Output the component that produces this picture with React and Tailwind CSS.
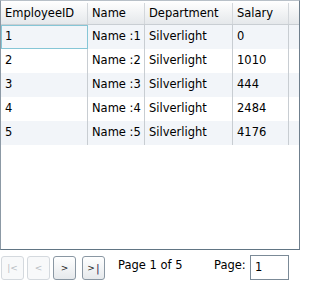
const rows = [
  { id: 1, name: "Name :1", dept: "Silverlight", salary: 0 },
  { id: 2, name: "Name :2", dept: "Silverlight", salary: 1010 },
  { id: 3, name: "Name :3", dept: "Silverlight", salary: 444 },
  { id: 4, name: "Name :4", dept: "Silverlight", salary: 2484 },
  { id: 5, name: "Name :5", dept: "Silverlight", salary: 4176 },
];

function PagerButton({ children, disabled }) {
  return (
    <div
      className={`flex items-center justify-center w-[23px] h-[24px] rounded-[3px] border ${
        disabled
          ? "border-[#d4d9de] text-[#b8bec4] bg-[#f8f9fa]"
          : "border-[#8a97a3] text-[#222] bg-gradient-to-b from-white to-[#e6e9ec]"
      } text-[9px] leading-none`}
    >
      {children}
    </div>
  );
}

export default function App() {
  return (
    <div
      className="w-[313px] h-[285px] bg-white text-[11.5px] text-black"
      style={{ fontFamily: '"DejaVu Sans", sans-serif' }}
    >
      <div className="w-[300px] h-[250px] border border-t-[#b8c0c8] border-l-[#8c99a5] border-r-[#6f7f8d] border-b-[#617584] flex flex-col">
        <div className="flex h-[24px] pt-[2px] bg-gradient-to-b from-white to-[#e5e8eb] border-b border-[#c9ced3]">
          <div className="w-[87px] pl-[4px] flex items-center border-r border-[#d3d7db]">EmployeeID</div>
          <div className="w-[57px] pl-[4px] flex items-center border-r border-[#d3d7db]">Name</div>
          <div className="w-[88px] pl-[4px] flex items-center border-r border-[#d3d7db]">Department</div>
          <div className="w-[56px] pl-[4px] flex items-center border-r border-[#d3d7db]">Salary</div>
          <div className="flex-1" />
        </div>
        {rows.map((r, idx) => (
          <div
            key={r.id}
            className={`flex h-[24px] ${idx % 2 === 0 ? "bg-[#f2f5f9]" : "bg-white"}`}
          >
            <div
              className={`w-[87px] pl-[4px] flex items-center border-r border-[#c8cdd2] ${
                idx === 0 ? "outline outline-1 -outline-offset-1 outline-[#86c6d6]" : ""
              }`}
            >
              {r.id}
            </div>
            <div className="w-[57px] pl-[4px] flex items-center border-r border-[#c8cdd2]">{r.name}</div>
            <div className="w-[88px] pl-[4px] flex items-center border-r border-[#c8cdd2]">{r.dept}</div>
            <div className="w-[56px] pl-[4px] flex items-center border-r border-[#c8cdd2]">{r.salary}</div>
            <div className="flex-1" />
          </div>
        ))}
        <div className="flex-1" />
      </div>
      <div className="flex items-start h-[35px] pt-[5px] pl-[1px]">
        <div className="flex gap-[3px] mt-[1px]">
          <PagerButton disabled>|&lt;</PagerButton>
          <PagerButton disabled>&lt;</PagerButton>
          <PagerButton>&gt;</PagerButton>
          <div className="ml-[3px]">
            <PagerButton>
              &gt;<span className="text-[#3b1f4f] text-[11px] ml-[1px]">|</span>
            </PagerButton>
          </div>
        </div>
        <div className="ml-[13px] mt-[2px] w-[96px]">Page 1 of 5</div>
        <div className="mt-[2px] w-[36px]">Page:</div>
        <div className="w-[39px] h-[25px] border border-[#7b8a97] bg-white pl-[4px] flex items-center">1</div>
      </div>
    </div>
  );
}
